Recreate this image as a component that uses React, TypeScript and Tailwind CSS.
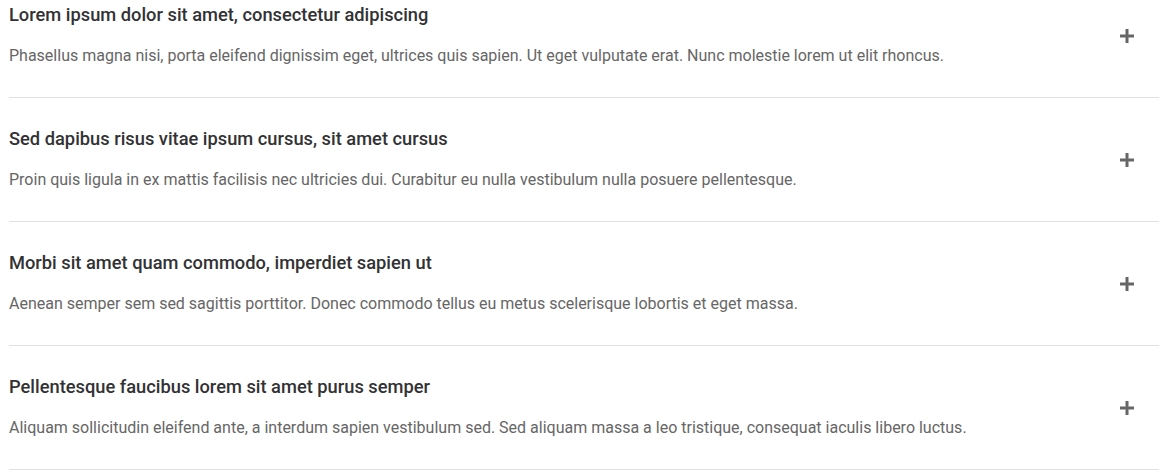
const items = [
  {
    title: 'Lorem ipsum dolor sit amet, consectetur adipiscing',
    body: 'Phasellus magna nisi, porta eleifend dignissim eget, ultrices quis sapien. Ut eget vulputate erat. Nunc molestie lorem ut elit rhoncus.',
  },
  {
    title: 'Sed dapibus risus vitae ipsum cursus, sit amet cursus',
    body: 'Proin quis ligula in ex mattis facilisis nec ultricies dui. Curabitur eu nulla vestibulum nulla posuere pellentesque.',
  },
  {
    title: 'Morbi sit amet quam commodo, imperdiet sapien ut',
    body: 'Aenean semper sem sed sagittis porttitor. Donec commodo tellus eu metus scelerisque lobortis et eget massa.',
  },
  {
    title: 'Pellentesque faucibus lorem sit amet purus semper',
    body: 'Aliquam sollicitudin eleifend ante, a interdum sapien vestibulum sed. Sed aliquam massa a leo tristique, consequat iaculis libero luctus.',
  },
];

function PlusIcon() {
  return (
    <svg width="14" height="14" viewBox="0 0 14 14" className="text-[#666]">
      <rect x="5.5" y="0" width="3" height="14" fill="currentColor" />
      <rect x="0" y="5.5" width="14" height="3" fill="currentColor" />
    </svg>
  );
}

export default function App() {
  return (
    <div className="bg-white w-[1164px] h-[474px] overflow-hidden pl-[9px] pr-[5px] font-['Roboto',sans-serif]">
      {items.map((item, i) => (
        <div
          key={i}
          className={`flex items-center border-b border-[#e2e2e2] pb-[29px] ${i === 0 ? 'pt-[3px]' : 'pt-[29px]'}`}
        >
          {/* Content */}
          <div className="flex-1 flex flex-col gap-[17px]">
            <h3 className="text-[18.3px] leading-6 font-medium text-[#323234]">{item.title}</h3>
            <p className="text-[16px] leading-6 text-[#666]">{item.body}</p>
          </div>

          {/* Toggle */}
          <div className="w-[50px] flex justify-end pr-[25px]">
            <PlusIcon />
          </div>
        </div>
      ))}
    </div>
  );
}
